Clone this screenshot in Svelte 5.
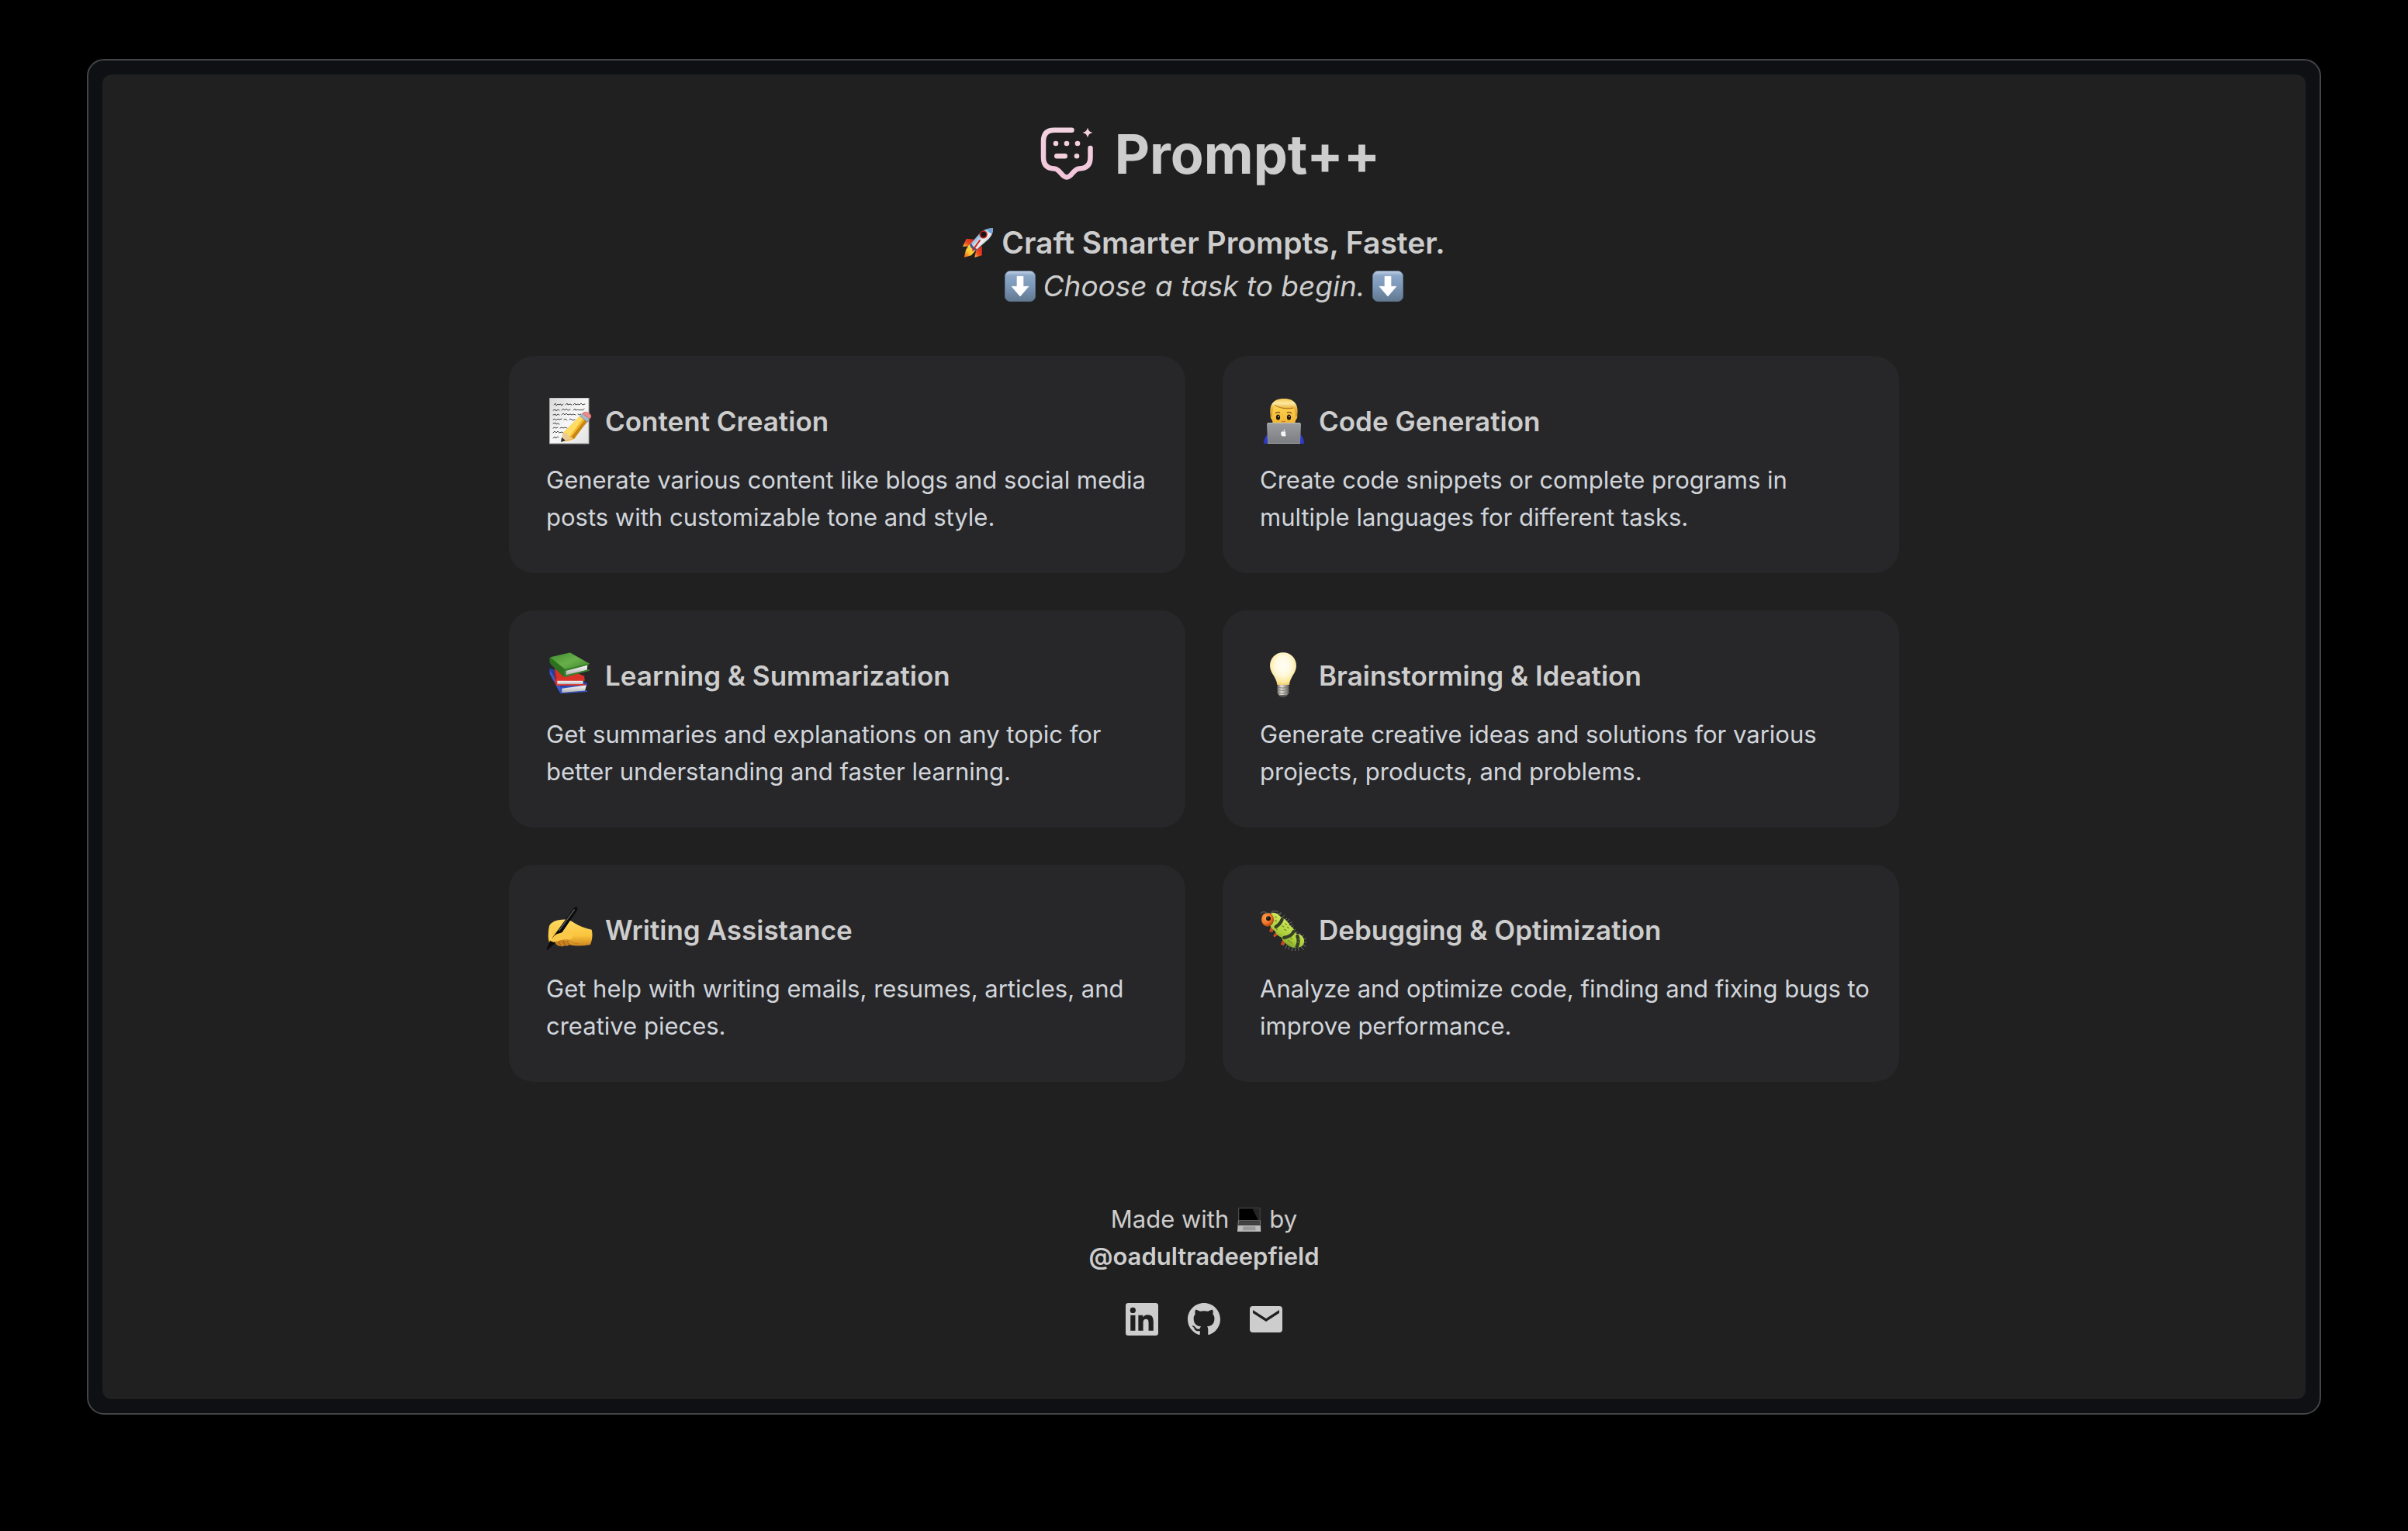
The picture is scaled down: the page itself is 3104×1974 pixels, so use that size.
<script>
  const tasks = [
    { icon: 'memo', title: 'Content Creation', text: 'Generate various content like blogs and social media posts with customizable tone and style.' },
    { icon: 'coder', title: 'Code Generation', text: 'Create code snippets or complete programs in multiple languages for different tasks.' },
    { icon: 'books', title: 'Learning & Summarization', text: 'Get summaries and explanations on any topic for better understanding and faster learning.' },
    { icon: 'bulb', title: 'Brainstorming & Ideation', text: 'Generate creative ideas and solutions for various projects, products, and problems.' },
    { icon: 'hand', title: 'Writing Assistance', text: 'Get help with writing emails, resumes, articles, and creative pieces.' },
    { icon: 'bug', title: 'Debugging & Optimization', text: 'Analyze and optimize code, finding and fixing bugs to improve performance.' }
  ];
</script>

{#snippet arrow()}
  <svg class="emoji" viewBox="198 204 120 120" aria-hidden="true">
    <defs>
      <linearGradient id="key" x1="0" y1="0" x2="0" y2="1">
        <stop offset="0" stop-color="#c3d3e6" /><stop offset=".16" stop-color="#8ba6c6" />
        <stop offset=".5" stop-color="#7c98b9" /><stop offset="1" stop-color="#61788f" />
      </linearGradient>
    </defs>
    <rect x="199" y="205" width="118" height="118" rx="21" fill="url(#key)" stroke="#5f7894" stroke-width="2" />
    <path d="M246 226h24v39h21l-33 38-33-38h21z" fill="#fff" stroke="#fff" stroke-width="2" stroke-linejoin="round" />
  </svg>
{/snippet}

{#snippet picture(name)}
  {#if name === 'memo'}
    <svg class="picture" viewBox="0 0 60 60" aria-hidden="true">
      <defs>
        <linearGradient id="paper" x1="0" y1="0" x2="1" y2="1"><stop offset="0" stop-color="#d9d9d9" /><stop offset=".5" stop-color="#f7f7f7" /><stop offset="1" stop-color="#e2e2e2" /></linearGradient>
      </defs>
      <rect x="4.500" y="0" width="50.500" height="59" fill="url(#paper)" stroke="#a5a5a5" />
      <g fill="none" stroke="#444" stroke-width="1" stroke-linecap="round">
        <path d="M10 9l2-2 1 3 2-2 1 1 3-1 1 2 2-2m3 1l2-2 1 2 3-1 2 1m2 0l2-2 1 2 3-1 2 1 2-2 2 2 3-1" />
        <path d="M9 16l3-1 1 2 2-2 2 1m3 0l2-2 2 2 2-2 2 2 3-1m4 1l2-2 1 2 3-1 2 1 2-1 2 1 2-2" />
        <path d="M9 22l3-1 1 2 2-2 2 1m3 0l2-2 2 2 2-2 2 2 3-1 2 1 2-1 3 1m3-1l2 1 2-1" />
        <path d="M9 28l2-1 2 2 2-2 2 1 3-1m3 1l2-1 2 2m3-1l2-1 2 2 3-1" />
        <path d="M9 33l3-1 1 2 2-1 2 1M9 39l2-1 2 1 2-1m3 1l2-1 2 1 2-1 3 1M9 45l2-2 2 2 2-2 2 2 3-1 2 1M9 52l2-2 1 2 3-2 1 1" />
      </g>
      <path d="M23 56l12-6 20-20-3-3z" fill="#000" opacity=".25" />
      <path d="M44 23l9 7-17 23-9 3-7-1 2-10z" fill="#f2b92f" />
      <path d="M44 23l4 3-18 24-8-5z" fill="#ffdc62" />
      <path d="M50 28l3 2-17 23-4-2z" fill="#c98513" />
      <path d="M22 45l5 1 2 4 6 2-10 3-5 1z" fill="#ebcb96" />
      <path d="M20 51l-1 6 6-2z" fill="#292929" />
      <path d="M47 20l9 7-3 4-9-7z" fill="#a8b8c5" stroke="#7b8996" stroke-width=".7" />
      <path d="M47 20c4-5 15 2 9 7z" fill="#ef8b8b" stroke="#c86868" stroke-width=".7" />
    </svg>
  {:else if name === 'coder'}
    <svg class="picture" viewBox="0 0 60 60" aria-hidden="true">
      <defs>
        <linearGradient id="hair" x1="0" y1="0" x2="0" y2="1"><stop offset="0" stop-color="#f3c650" /><stop offset=".25" stop-color="#fdeaa2" /><stop offset=".5" stop-color="#e9b442" /><stop offset="1" stop-color="#cf9528" /></linearGradient>
        <linearGradient id="face" x1="0" y1="0" x2="0" y2="1"><stop offset="0" stop-color="#ffd550" /><stop offset="1" stop-color="#f0b132" /></linearGradient>
        <linearGradient id="lid" x1="0" y1="0" x2="0" y2="1"><stop offset="0" stop-color="#9b9da0" /><stop offset="1" stop-color="#7b7d80" /></linearGradient>
      </defs>
      <path d="M5 59c0-7 3-12 9-14h34c6 2 9 7 9 14z" fill="#2f39c9" />
      <path d="M15 9h32v12q2 1 1 5l-2 3-1 6H17l-1-6-2-3q-1-4 1-5z" fill="url(#face)" />
      <path d="M14 24C11 8 18 1 31 1s20 7 17 23l-2 1c0-6-1-10-3-12-9 2-19 0-24-4-2 4-3 9-3 16z" fill="url(#hair)" />
      <path d="M19 9c5 4 15 6 24 4" fill="none" stroke="#a86f17" stroke-width="1" />
      <path d="M20 20c2-2 4-2 6-1m9 0c2-1 4-1 6 1" fill="none" stroke="#79501c" stroke-width="1.400" />
      <ellipse cx="23.500" cy="25" rx="2.600" ry="3.600" fill="#221508" /><ellipse cx="37.500" cy="25" rx="2.600" ry="3.600" fill="#221508" />
      <circle cx="24" cy="24" r=".8" fill="#fff" /><circle cx="38" cy="24" r=".8" fill="#fff" />
      <path d="M28 30c1 1 4 1 5 0" stroke="#b36e18" fill="none" />
      <path d="M9 34q0-2 2-2h40q2 0 2 2l-1 25H10z" fill="url(#lid)" />
      <path d="M10 32.500h42M10 58.500h42" stroke="#b9bbbd" />
      <path d="M30.500 43.500c1-.5 2.500-.5 3 .5-1 1-1 3 .3 3.700-.8 2-1.800 2.300-3.300 1.600-1.600.7-2.700-.3-3.300-2.600-.5-2.700 1.200-4 3.300-3.200zM30.500 43c0-1.500.7-2.400 1.800-2.700 0 1.500-.7 2.500-1.800 2.700z" fill="#f6f6f6" />
    </svg>
  {:else if name === 'books'}
    <svg class="picture" viewBox="42 36 180 180" aria-hidden="true">
      <defs>
        <linearGradient id="green" x1="0" y1="0" x2="1" y2="1"><stop offset="0" stop-color="#3f8a2e" /><stop offset=".5" stop-color="#69b04c" /><stop offset="1" stop-color="#3b8129" /></linearGradient>
        <linearGradient id="pages" x1="0" y1="0" x2="0" y2="1"><stop offset="0" stop-color="#fff" /><stop offset="1" stop-color="#aaa" /></linearGradient>
      </defs>
      <path d="M55 103q0-7 8-4l25 12 110 43 4 8-100 14v20q-4 0-8-5L56 119z" fill="#253f9f" />
      <path d="M56 104l42 68 4 22q-4 0-8-5L56 119z" fill="#3d5bc9" />
      <path d="M101 173l97-11-6 24-90 8z" fill="url(#pages)" />
      <path d="M99 171l102-14v6l-98 13v16l98-8v5l-102 7q-7-13 0-25z" fill="#3453c1" />
      <path d="M75 95l25-5 90 38v14H80l-4-16z" fill="#d83326" />
      <path d="M75 97l8 41v25q-6 0-7-8z" fill="#a81b18" />
      <path d="M82 145h103v17H82z" fill="url(#pages)" />
      <path d="M80 138l111 1v7H85v14l107-1v5l-109 1q-9-14-3-27z" fill="#dd3428" />
      <path d="M55 62q1-6 7-8l68-16q5-1 9 2l71 40-97 26z" fill="url(#green)" />
      <path d="M55 62q4-6 9-1l51 41-1 29q-5 0-9-4L60 83q-6-7-5-21z" fill="#2d7020" />
      <path d="M117 106l85-21-2 20-84 21z" fill="url(#pages)" />
      <path d="M114 101l96-22-3 6-88 23v16l91-22v5l-94 25q-9-13-2-31z" fill="#38822a" />
    </svg>
  {:else if name === 'bulb'}
    <svg class="picture" viewBox="42 36 180 180" aria-hidden="true">
      <defs>
        <radialGradient id="glow" cx=".5" cy=".4" r=".62"><stop offset="0" stop-color="#fffef8" /><stop offset=".5" stop-color="#fff9dc" /><stop offset=".85" stop-color="#fbe69a" /><stop offset="1" stop-color="#efcc68" /></radialGradient>
        <linearGradient id="screw" x1="0" y1="0" x2="1" y2="0"><stop offset="0" stop-color="#77736c" /><stop offset=".35" stop-color="#e4e1db" /><stop offset=".65" stop-color="#aaa69f" /><stop offset="1" stop-color="#625f5b" /></linearGradient>
      </defs>
      <path d="M132 37c30 0 51 23 51 51 0 30-24 42-27 74h-47c-3-32-28-44-28-74 0-28 21-51 51-51z" fill="url(#glow)" />
      <path d="M110 162h44v33l-10 11q-12 6-24 0l-10-11z" fill="url(#screw)" />
      <path d="M110 172q22 6 44-2M110 182q22 6 44-2M111 193q22 6 42-2" fill="none" stroke="#77736d" stroke-width="2.500" />
      <path d="M118 202h29q-4 8-15 8t-14-8z" fill="#48494b" />
    </svg>
  {:else if name === 'hand'}
    <svg class="picture" viewBox="42 45 180 180" aria-hidden="true">
      <defs>
        <linearGradient id="skin" x1="0" y1="0" x2="0" y2="1"><stop offset="0" stop-color="#ffdb65" /><stop offset=".6" stop-color="#fac43c" /><stop offset="1" stop-color="#c9821f" /></linearGradient>
      </defs>
      <path d="M76 178q5 20 20 19 10 4 18-2 10 4 17-3 30 9 82 0 12-30 5-58-35-6-66-25-22-18-50-14-35 2-48 24-6 30-3 55 2 14 12 14z" fill="url(#skin)" />
      <path d="M76 178q1 18 20 19 11 3 18-2 10 4 18-3l-10-14-26-5z" fill="#c98022" />
      <path d="M91 178q2 12 8 18m10-18q1 8 6 16m10-17q1 9 6 14" stroke="#8e5415" stroke-width="2.500" fill="none" />
      <path d="M154 47q10-3 9 6-1 8-7 15L73 189l-27 24q-3 0-2-4l13-31 88-122q4-6 9-9z" fill="#0b0b0c" />
      <path d="M151 57L92 137" stroke="#5d6064" stroke-width="4" stroke-linecap="round" stroke-dasharray="24 3" />
      <path d="M66 171q3-14 18-20l42-13q15-2 22 15l-9 18q-23-2-46 7-17 7-25 4-5-4-2-11z" fill="#fbc947" />
      <path d="M52 167q-3-28 4-46l24-10-14 31 2 38q-12 0-16-13z" fill="#fdce51" />
      <path d="M68 181q17 2 34-6 20-5 37 5 12 9 30 9" fill="none" stroke="#c07a1e" stroke-width="2.500" />
    </svg>
  {:else}
    <svg class="picture" viewBox="42 45 180 180" aria-hidden="true">
      <defs>
        <linearGradient id="lime" x1="1" y1="0" x2=".4" y2="1"><stop offset="0" stop-color="#86a52f" /><stop offset=".4" stop-color="#cbe458" /><stop offset=".7" stop-color="#aed03b" /><stop offset="1" stop-color="#6f9224" /></linearGradient>
        <radialGradient id="orange" cx=".35" cy=".35" r=".7"><stop offset="0" stop-color="#ff9d48" /><stop offset=".6" stop-color="#f07528" /><stop offset="1" stop-color="#a63c12" /></radialGradient>
      </defs>
      <path d="M107 76l17-8M113 83l12-13M124 91l14-14M133 100l14-11M142 105l15-12M149 113l18-9M154 122l16-7M161 132l12-10M172 142l7-10M181 152l7-12M191 158l7-11M203 163l10-9M209 171l13-2M213 182l9 1M208 191l13 9M199 198l13 14M190 203l2 12M181 202l-3 14M171 202l-6 14M157 197l-5 14M147 193l-7 15M140 184l-8 12" stroke="#8d968a" stroke-width="2" />
      <path d="M84 122l-6 19 13 4 7-20zM107 142l-13 13 3 9 20-13zM131 171l-9 20 12 4 10-19z" fill="#c44a22" />
      <path d="M78 71Q104 62 122 84Q146 94 158 118Q176 130 182 150Q206 150 213 172Q216 196 196 202Q166 210 145 190Q130 178 126 164Q106 156 101 140Q86 130 82 118z" fill="url(#lime)" />
      <path d="M128 94q-5 16-24 29M173 141q-8 19-37 24M187 159q9 19-2 41" fill="none" stroke="#353e27" stroke-width="13" stroke-linecap="round" />
      <path d="M101 84l4 2m-4 12l5 3m23 19l6 3m6-12l4 4m-8 18l6 3m6-12l4 4m-2 47l6 3m5-12l4 4m-6 12l6 4m26-16l5 3m-7 8l6 3m-91-54l4 4" stroke="#6f8e26" stroke-width="4" stroke-linecap="round" />
      <ellipse cx="72" cy="95" rx="24" ry="27" fill="url(#orange)" />
      <circle cx="75" cy="91" r="9" fill="#171717" /><circle cx="72" cy="88" r="2" fill="#999" />
      <path d="M70 70q-13-10-24 0M83 72q8-16 29-7" fill="none" stroke="#4b4d49" stroke-width="5" stroke-linecap="round" />
    </svg>
  {/if}
{/snippet}

<main class="page">
  <div class="frame">
    <div class="screen">
      <header>
        <h1>
          <svg class="logo" viewBox="-7 -4 96 96" aria-hidden="true">
            <defs>
              <linearGradient id="pink" x1="0" y1="0" x2="0" y2="1"><stop offset="0" stop-color="#f1d3df" /><stop offset="1" stop-color="#f3c5da" /></linearGradient>
            </defs>
            <path d="M49.500 12.800H27Q13 12.800 13 27V48Q13 62 27 62.500C35 63 36 73.500 43 73.500S51 63 59 62.500Q73.500 62 73.500 48V36" fill="none" stroke="url(#pink)" stroke-width="6.500" stroke-linecap="round" />
            <g fill="#f4cfdd">
              <circle cx="29" cy="30" r="3.300" /><circle cx="43" cy="30" r="3.300" /><circle cx="57" cy="30" r="3.300" />
              <rect x="27" y="43" width="17" height="6.500" rx="3.250" /><circle cx="56" cy="46.200" r="3.300" />
              <path d="M70 9.500c1.200 4.200 2.300 5.300 6.500 6.500-4.200 1.200-5.300 2.300-6.500 6.500-1.200-4.200-2.300-5.300-6.500-6.500 4.200-1.200 5.300-2.300 6.500-6.500z" />
            </g>
          </svg>
          Prompt++
        </h1>
        <p class="lead strong">
          <svg class="emoji" viewBox="27 36 120 120" aria-hidden="true">
            <defs>
              <linearGradient id="hull" x1="0" y1="0" x2="1" y2="1"><stop offset="0" stop-color="#3b6ea8" /><stop offset=".35" stop-color="#8eb8e0" /><stop offset=".55" stop-color="#f0f2f3" /><stop offset="1" stop-color="#606b76" /></linearGradient>
              <linearGradient id="fin" x1="1" y1="0" x2="0" y2="1"><stop offset="0" stop-color="#d3231c" /><stop offset=".6" stop-color="#ea4a22" /><stop offset="1" stop-color="#ffc23a" /></linearGradient>
              <linearGradient id="flame" x1="1" y1="0" x2="0" y2="1"><stop offset="0" stop-color="#fff07a" /><stop offset=".6" stop-color="#fcc52d" /><stop offset="1" stop-color="#e5501c" /></linearGradient>
            </defs>
            <path d="M73 83l-32-3-14 31 32-2z" fill="url(#fin)" />
            <path d="M102 109l-1 36-28 8 6-30z" fill="url(#fin)" />
            <path d="M52 103l-13 21-7 29 28-8 18-21z" fill="url(#flame)" />
            <path d="M144 40q-35-2-57 26L54 104q4 17 22 23l41-36q29-23 27-51z" fill="url(#hull)" />
            <path d="M144 40q-12-1-23 4 5 13 19 17 4-10 4-21z" fill="#6fa2d6" />
            <path d="M60 97q5 16 23 24l-7 6Q58 120 54 104z" fill="#465d84" />
            <circle cx="107" cy="64" r="13" fill="#191414" stroke="#ba211c" stroke-width="5" />
            <path d="M93 87l-27 38" stroke="#d3231c" stroke-width="6" stroke-linecap="round" />
          </svg>
          Craft Smarter Prompts, Faster.
        </p>
        <p class="lead">{@render arrow()}<em>Choose a task to begin.</em>{@render arrow()}</p>
      </header>

      <nav class="tasks" aria-label="Tasks">
        {#each tasks as task}
          <a class="card" href="#{task.icon}">
            <h2>{@render picture(task.icon)}{task.title}</h2>
            <p>{task.text}</p>
          </a>
        {/each}
      </nav>

      <footer>
        <p class="made">
          <span>Made with</span>
          <svg viewBox="642 50 96 96" aria-hidden="true">
            <path d="M651 54h80q3 0 3 3v46h-86V57q0-3 3-3z" fill="#4b4b4b" />
            <path d="M652 57h78v44h-78z" fill="#000" /><path d="M703 57h27v44h-5z" fill="#262626" />
            <path d="M648 103h86l2 43h-91z" fill="#bbb" /><path d="M650 104h82l2 18h-86z" fill="#353535" />
            <path d="M649 110h84M649 116h84" stroke="#777" stroke-width="2" stroke-dasharray="4 2" />
            <path d="M668 126h46l2 15h-51z" fill="#999" />
          </svg>
          <span>by</span>
        </p>
        <a class="author" href="#author">@oadultradeepfield</a>
        <div class="social">
          <a href="#linkedin" aria-label="LinkedIn">
            <svg viewBox="0 0 24 24"><path d="M18.340 18.340h-2.670v-4.180c0-1-.02-2.280-1.390-2.280-1.390 0-1.600 1.090-1.600 2.210v4.250h-2.670V9.750h2.560v1.170h.04c.36-.67 1.230-1.390 2.530-1.390 2.700 0 3.200 1.780 3.200 4.100zM7 8.570a1.550 1.550 0 1 1 0-3.100 1.550 1.550 0 0 1 0 3.100zm1.340 9.770H5.670V9.750h2.670zM19.670 3H4.330C3.600 3 3 3.580 3 4.300v15.400c0 .72.600 1.300 1.330 1.300h15.340c.73 0 1.330-.58 1.330-1.300V4.300c0-.72-.6-1.300-1.330-1.300z" /></svg>
          </a>
          <a href="#github" aria-label="GitHub">
            <svg viewBox="-2.667 -2.667 21.333 21.333"><path d="M8 0C3.580 0 0 3.580 0 8c0 3.540 2.290 6.530 5.470 7.590.4.070.55-.17.55-.38 0-.19-.01-.82-.01-1.490-2.010.37-2.530-.49-2.690-.94-.09-.23-.48-.94-.82-1.130-.28-.15-.68-.52-.01-.53.63-.01 1.080.58 1.230.82.72 1.210 1.870.87 2.330.66.070-.52.28-.87.51-1.070-1.780-.2-3.640-.89-3.640-3.950 0-.87.31-1.590.82-2.150-.08-.2-.36-1.020.08-2.120 0 0 .67-.21 2.200.82.64-.18 1.320-.27 2-.27s1.360.09 2 .27c1.530-1.040 2.200-.82 2.200-.82.44 1.100.16 1.920.08 2.120.51.56.82 1.270.82 2.150 0 3.070-1.870 3.750-3.650 3.950.29.25.54.73.54 1.480 0 1.070-.01 1.930-.01 2.200 0 .21.15.46.55.38A8.010 8.010 0 0 0 16 8c0-4.420-3.580-8-8-8z" /></svg>
          </a>
          <a href="#mail" aria-label="Email">
            <svg viewBox="0 0 56 56"><path fill-rule="evenodd" d="M11 11h34a4 4 0 0 1 4 4v26a4 4 0 0 1-4 4H11a4 4 0 0 1-4-4V15a4 4 0 0 1 4-4zM11 16v4l17 11 17-11v-4L28 27z" /></svg>
          </a>
        </div>
      </footer>
    </div>
  </div>
</main>

<style>
  :global(body) {
    margin: 0;
    background: #000;
  }
  .page {
    box-sizing: border-box;
    min-height: 100vh;
    padding: 76px 112px;
    font-family: Inter, 'Liberation Sans', sans-serif;
    font-size: 31px;
    line-height: 48px;
    color: #cdcdcd;
  }
  .frame {
    padding: 18px;
    border: 2px solid #434446;
    border-radius: 22px;
    background: #0f1014;
  }
  .screen {
    padding: 55px 48px 75px;
    border-radius: 12px;
    background: #202020;
  }
  h1, h2, p { margin: 0; }
  a { color: inherit; text-decoration: none; }
  svg { display: block; flex: none; }
  h1 {
    display: flex;
    align-items: center;
    justify-content: center;
    gap: 16px;
    margin-bottom: 38px;
    font-size: 70px;
    line-height: 96px;
    font-weight: 700;
  }
  .logo { width: 96px; height: 96px; }
  .lead {
    display: flex;
    align-items: center;
    justify-content: center;
    gap: 10px;
    font-size: 37px;
    line-height: 56px;
  }
  .strong {
    font-size: 39px;
    font-weight: 600;
  }
  .emoji { width: 40px; height: 40px; }
  .tasks {
    display: grid;
    grid-template-columns: repeat(2, 1fr);
    gap: 48px;
    max-width: 1792px;
    margin: 62px auto 0;
  }
  .card {
    padding: 48px 36px 48px 48px;
    border-radius: 32px;
    background: #272729;
  }
  h2 {
    display: flex;
    align-items: center;
    gap: 16px;
    margin-bottom: 16px;
    font-size: 35px;
    line-height: 72px;
    font-weight: 600;
  }
  .picture { width: 60px; height: 60px; }
  .card p { color: #d1d5db; }
  footer {
    display: flex;
    flex-direction: column;
    align-items: center;
    margin-top: 153px;
  }
  .made {
    display: flex;
    align-items: center;
    gap: 10px;
  }
  .made svg { width: 32px; height: 32px; }
  .author { font-weight: 600; }
  .social {
    display: flex;
    gap: 24px;
    margin-top: 29px;
  }
  .social svg {
    width: 56px;
    height: 56px;
    fill: currentColor;
  }
</style>
